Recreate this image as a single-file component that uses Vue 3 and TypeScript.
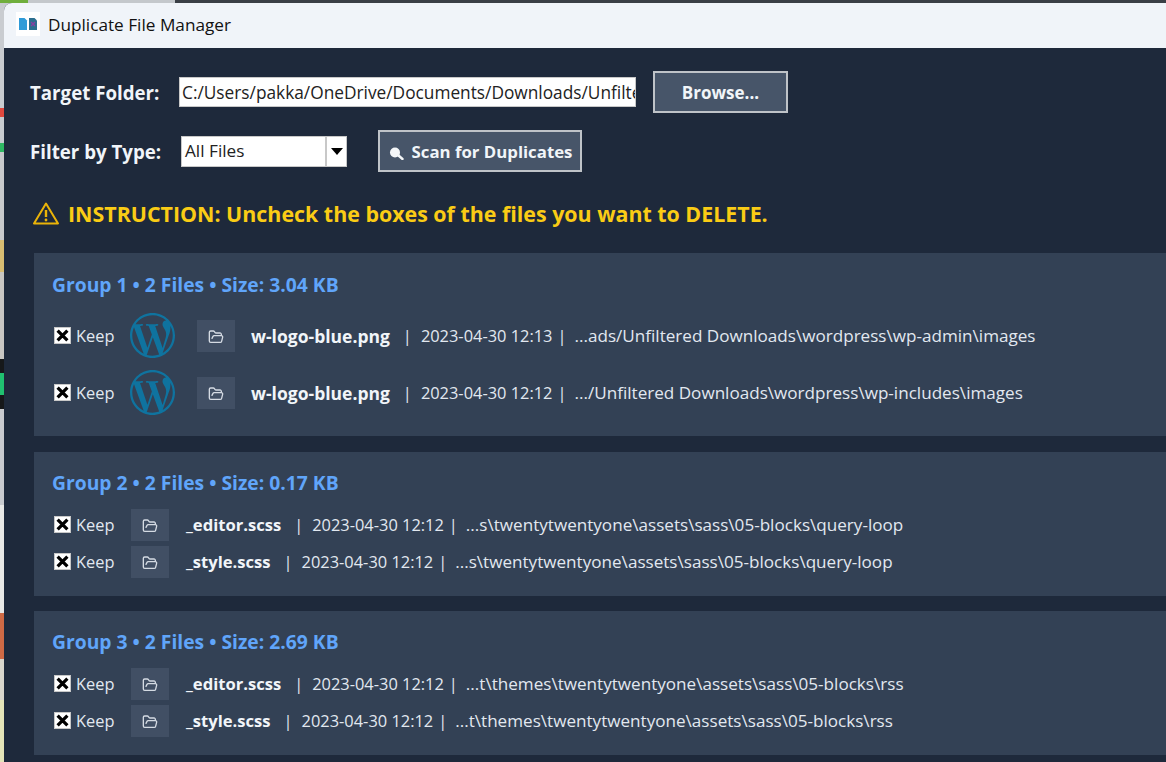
<script setup lang="ts">
interface DupFile {
    name: string;
    date: string;
    path: string;
    thumb?: boolean;
}

interface Group {
    size: string;
    files: DupFile[];
}

const groups: Group[] = [
    {
        size: '3.04 KB',
        files: [
            { name: 'w-logo-blue.png', date: '2023-04-30 12:13', path: '...ads/Unfiltered Downloads\\wordpress\\wp-admin\\images', thumb: true },
            { name: 'w-logo-blue.png', date: '2023-04-30 12:12', path: '.../Unfiltered Downloads\\wordpress\\wp-includes\\images', thumb: true },
        ],
    },
    {
        size: '0.17 KB',
        files: [
            { name: '_editor.scss', date: '2023-04-30 12:12', path: '...s\\twentytwentyone\\assets\\sass\\05-blocks\\query-loop' },
            { name: '_style.scss', date: '2023-04-30 12:12', path: '...s\\twentytwentyone\\assets\\sass\\05-blocks\\query-loop' },
        ],
    },
    {
        size: '2.69 KB',
        files: [
            { name: '_editor.scss', date: '2023-04-30 12:12', path: '...t\\themes\\twentytwentyone\\assets\\sass\\05-blocks\\rss' },
            { name: '_style.scss', date: '2023-04-30 12:12', path: '...t\\themes\\twentytwentyone\\assets\\sass\\05-blocks\\rss' },
        ],
    },
];

const folderPath = 'C:/Users/pakka/OneDrive/Documents/Downloads/Unfilte';

// what shows of the desktop behind the window
const leftStrip = [
    { h: 105, c: '#c9ccd0' }, { h: 9, c: '#e0483e' }, { h: 26, c: '#c8ccd0' }, { h: 9, c: '#2fb863' },
    { h: 88, c: '#c8cacc' }, { h: 32, c: '#d8bd72' }, { h: 87, c: '#c8c6c2' }, { h: 14, c: '#16181a' },
    { h: 22, c: '#20c070' }, { h: 14, c: '#16181a' }, { h: 96, c: '#c8cace' }, { h: 108, c: '#e8e8e6' },
    { h: 46, c: '#cf6a45' }, { h: 41, c: '#d8d6cc' }, { h: 62, c: '#e4e4b8' },
];
</script>

<template>
    <div class="desktop">
        <div class="top-strip">
            <span class="ts-green"></span>
            <span class="ts-grey"></span>
            <span class="ts-dark"></span>
        </div>
        <div class="under">
            <div class="left-strip">
                <span v-for="(s, i) in leftStrip" :key="i" :style="{ height: s.h + 'px', background: s.c }"></span>
            </div>

            <div class="window">
                <div class="titlebar">
                    <div class="app-icon">
                        <svg width="18" height="12" viewBox="0 0 18 12">
                            <path d="M0 0h5.500L8 2.500V12H0z" fill="#2f9bd8" />
                            <path d="M10 0h5.500L18 2.500V12h-8z" fill="#2c6f8f" />
                            <path d="M12 4l4 4M16 4l-4 4" stroke="#8a3fa0" stroke-width="1.300" />
                        </svg>
                    </div>
                    <span class="title">Duplicate File Manager</span>
                </div>

                <div class="content">
                    <div class="form-row first">
                        <label class="lbl lbl-target">Target Folder:</label>
                        <div class="path-input"><span>{{ folderPath }}</span></div>
                        <button class="btn btn-browse">Browse...</button>
                    </div>

                    <div class="form-row second">
                        <label class="lbl lbl-filter">Filter by Type:</label>
                        <div class="combo">
                            <span class="combo-value">All Files</span>
                            <span class="combo-arrow"><i></i></span>
                        </div>
                        <button class="btn btn-scan">
                            <svg class="scan-icon" width="16" height="14" viewBox="0 0 16 14">
                                <circle cx="6" cy="6.500" r="5" fill="#f4f6f8" />
                                <path d="M9.500 9.500L13.500 13" stroke="#f4f6f8" stroke-width="2.400" stroke-linecap="round" />
                            </svg>
                            Scan for Duplicates
                        </button>
                    </div>

                    <div class="instruction">
                        <svg width="28" height="24" viewBox="0 0 28 24" fill="none">
                            <path d="M14 2.500L26 22.500H2z" stroke="#eab308" stroke-width="2" stroke-linejoin="round" />
                            <path d="M14 9v7" stroke="#eab308" stroke-width="2.400" />
                            <circle cx="14" cy="19" r="1.400" fill="#eab308" />
                        </svg>
                        <span>INSTRUCTION: Uncheck the boxes of the files you want to DELETE.</span>
                    </div>

                    <section v-for="(g, gi) in groups" :key="gi" class="group" :class="{ 'has-thumbs': g.files[0].thumb }">
                        <h2 class="group-title">Group {{ gi + 1 }} • {{ g.files.length }} Files • Size: {{ g.size }}</h2>
                        <div v-for="(f, fi) in g.files" :key="fi" class="file-row">
                            <span class="check">
                                <svg width="13" height="13" viewBox="0 0 12 12">
                                    <path d="M1.500 1.500l9 9M10.500 1.500l-9 9" stroke="#000" stroke-width="3" />
                                </svg>
                            </span>
                            <span class="keep">Keep</span>
                            <svg v-if="f.thumb" class="thumb" width="45" height="45" viewBox="0 0 24 24">
                                <path fill="#0f739f" d="M21.469 6.825c.84 1.537 1.318 3.3 1.318 5.175 0 3.979-2.156 7.456-5.363 9.325l3.295-9.527c.615-1.54.82-2.771.82-3.864 0-.405-.026-.78-.07-1.11m-7.981.105c.647-.03 1.232-.105 1.232-.105.582-.075.514-.93-.067-.899 0 0-1.755.135-2.88.135-1.064 0-2.85-.15-2.85-.15-.585-.03-.661.855-.075.885 0 0 .54.061 1.125.09l1.68 4.605-2.37 7.08L5.354 6.9c.649-.03 1.234-.1 1.234-.1.585-.075.516-.93-.065-.896 0 0-1.746.138-2.874.138-.2 0-.438-.008-.69-.015C4.911 3.15 8.235 1.215 12 1.215c2.809 0 5.365 1.072 7.286 2.833-.046-.003-.091-.009-.141-.009-1.06 0-1.812.923-1.812 1.914 0 .89.513 1.643 1.06 2.531.411.72.89 1.643.89 2.977 0 .915-.354 2.052-.821 3.59l-1.076 3.592-3.9-11.61.001.033zM12 22.784c-1.059 0-2.081-.153-3.048-.437l3.237-9.406 3.315 9.087c.024.053.05.101.078.149-1.12.393-2.325.609-3.582.609M1.211 12c0-1.564.336-3.05.935-4.39L7.29 21.709C3.694 19.96 1.212 16.271 1.211 12M12 0C5.385 0 0 5.385 0 12s5.385 12 12 12 12-5.385 12-12S18.615 0 12 0" />
                            </svg>
                            <button class="folder-btn">
                                <svg width="16" height="16" viewBox="0 0 24 24" fill="none" stroke="#d5dbe3" stroke-width="2" stroke-linecap="round" stroke-linejoin="round">
                                    <path d="m6 14 1.500-2.900A2 2 0 0 1 9.240 10H20a2 2 0 0 1 1.940 2.500l-1.540 6a2 2 0 0 1-1.950 1.500H4a2 2 0 0 1-2-2V5a2 2 0 0 1 2-2h3.900a2 2 0 0 1 1.690.900l.810 1.200a2 2 0 0 0 1.670.900H18a2 2 0 0 1 2 2v2" />
                                </svg>
                            </button>
                            <span class="fname">{{ f.name }}</span>
                            <span class="pipe first-pipe">|</span>
                            <span class="date">{{ f.date }}</span>
                            <span class="pipe">|</span>
                            <span class="fpath">{{ f.path }}</span>
                        </div>
                    </section>
                </div>
            </div>
        </div>
    </div>
</template>

<style scoped>
* { box-sizing: border-box; }

.desktop {
    width: 1166px; height: 762px; overflow: hidden;
    display: flex; flex-direction: column;
    font-family: "Open Sans", "Noto Sans", sans-serif;
    background: #c8cccf;
}

.top-strip { height: 3px; display: flex; flex: none; }
.ts-green { width: 28px; background: #6fae3c; }
.ts-grey { width: 147px; background: #c4c8cc; }
.ts-dark { flex: 1; background: #3a3f46; }

.under { flex: 1; display: flex; min-height: 0; }
.left-strip { width: 4px; flex: none; display: flex; flex-direction: column; }
.left-strip span { display: block; flex: none; }

.window { flex: 1; min-width: 0; display: flex; flex-direction: column; border-top-left-radius: 8px; overflow: hidden; background: #1e293b; }

.titlebar { height: 45px; flex: none; background: #f0f4f9; display: flex; align-items: center; padding: 0 0 3px 12px; }
.app-icon { width: 24px; height: 24px; background: #fff; display: flex; align-items: center; justify-content: center; }
.title { margin-left: 8px; font-size: 17.2px; color: #111; white-space: nowrap; }

.content { flex: 1; min-height: 0; padding: 0 0 0 26px; }

.form-row { display: flex; align-items: center; }
.form-row.first { margin-top: 23px; height: 42px; }
.form-row.second { margin-top: 17px; height: 42px; }

.lbl { color: #f1f5f9; font-weight: 700; font-size: 18.7px; white-space: nowrap; }
.lbl-target { width: 149px; }
.lbl-filter { width: 151px; }

.path-input {
    width: 457px; height: 30px; background: #fff; border: 1px solid #c8c8c8;
    color: #222; font-size: 17.3px; line-height: 30px; padding-left: 2px;
    overflow: hidden; white-space: nowrap;
}

.btn {
    height: 42px; background: #475569; color: #f1f5f9;
    border: 2px solid #bfc3c8; font: inherit; font-weight: 700; font-size: 17px;
    display: flex; align-items: center; justify-content: center; padding: 0;
}
.btn-browse { width: 135px; margin-left: 17px; }
.btn-scan { width: 204px; margin-left: 31px; gap: 7px; font-size: 16.8px; padding-left: 1px; }
.scan-icon { margin-top: 4px; }

.combo {
    width: 166px; height: 31px; background: #fff; border: 1px solid #c8c8c8;
    display: flex; color: #222; font-size: 17.2px; line-height: 27px;
}
.combo-value { flex: 1; padding-left: 3px; }
.combo-arrow { width: 21px; border-left: 2px solid #c8c8c8; display: flex; align-items: center; justify-content: center; }
.combo-arrow i { width: 0; height: 0; border: 6px solid transparent; border-top: 7px solid #000; border-bottom: 0; }

.instruction {
    margin-top: 27px; margin-left: 2px; display: flex; align-items: center; gap: 8px;
    color: #facc15; font-weight: 700; font-size: 21.4px; height: 28px; white-space: nowrap;
}
.instruction svg { flex: none; }

.group { margin: 0 0 15px 4px; background: #334155; padding: 17px 0 0 18px; height: 144px; }
.group:first-of-type { margin-top: 26px; }
.group.has-thumbs { height: 183px; margin-bottom: 16px; padding-top: 18px; }

.group-title { margin: 0 0 9px; font-size: 19.3px; line-height: 28px; font-weight: 700; color: #60a5fa; white-space: nowrap; }
.has-thumbs .group-title { margin-bottom: 8px; }

.file-row { display: flex; align-items: center; height: 37px; color: #e2e8f0; font-size: 16.4px; white-space: nowrap; }
.has-thumbs .file-row { height: 57px; }

.check {
    width: 17px; height: 17px; margin-left: 2px; background: #fff; border: 1px solid #c8c8c8;
    display: flex; align-items: center; justify-content: center; flex: none;
}
.keep { margin-left: 5px; width: 55px; flex: none; }
.thumb { flex: none; margin: 0 22px 0 -1px; }
.folder-btn {
    width: 38px; height: 32px; background: #414f64; border: 0; padding: 0; flex: none;
    display: flex; align-items: center; justify-content: center;
}
.folder-btn svg { margin-top: 3px; }
.fname { margin-left: 17px; font-weight: 700; font-size: 16.6px; color: #f1f5f9; }
.has-thumbs .fname { margin-left: 16px; font-size: 17.5px; }
.pipe { margin: 0 8px 0 5px; }
.first-pipe { margin-left: 13px; margin-right: 9px; }
.fpath { font-size: 17.1px; }
</style>

<style>
html, body { margin: 0; background: #c8cccf; }
</style>
